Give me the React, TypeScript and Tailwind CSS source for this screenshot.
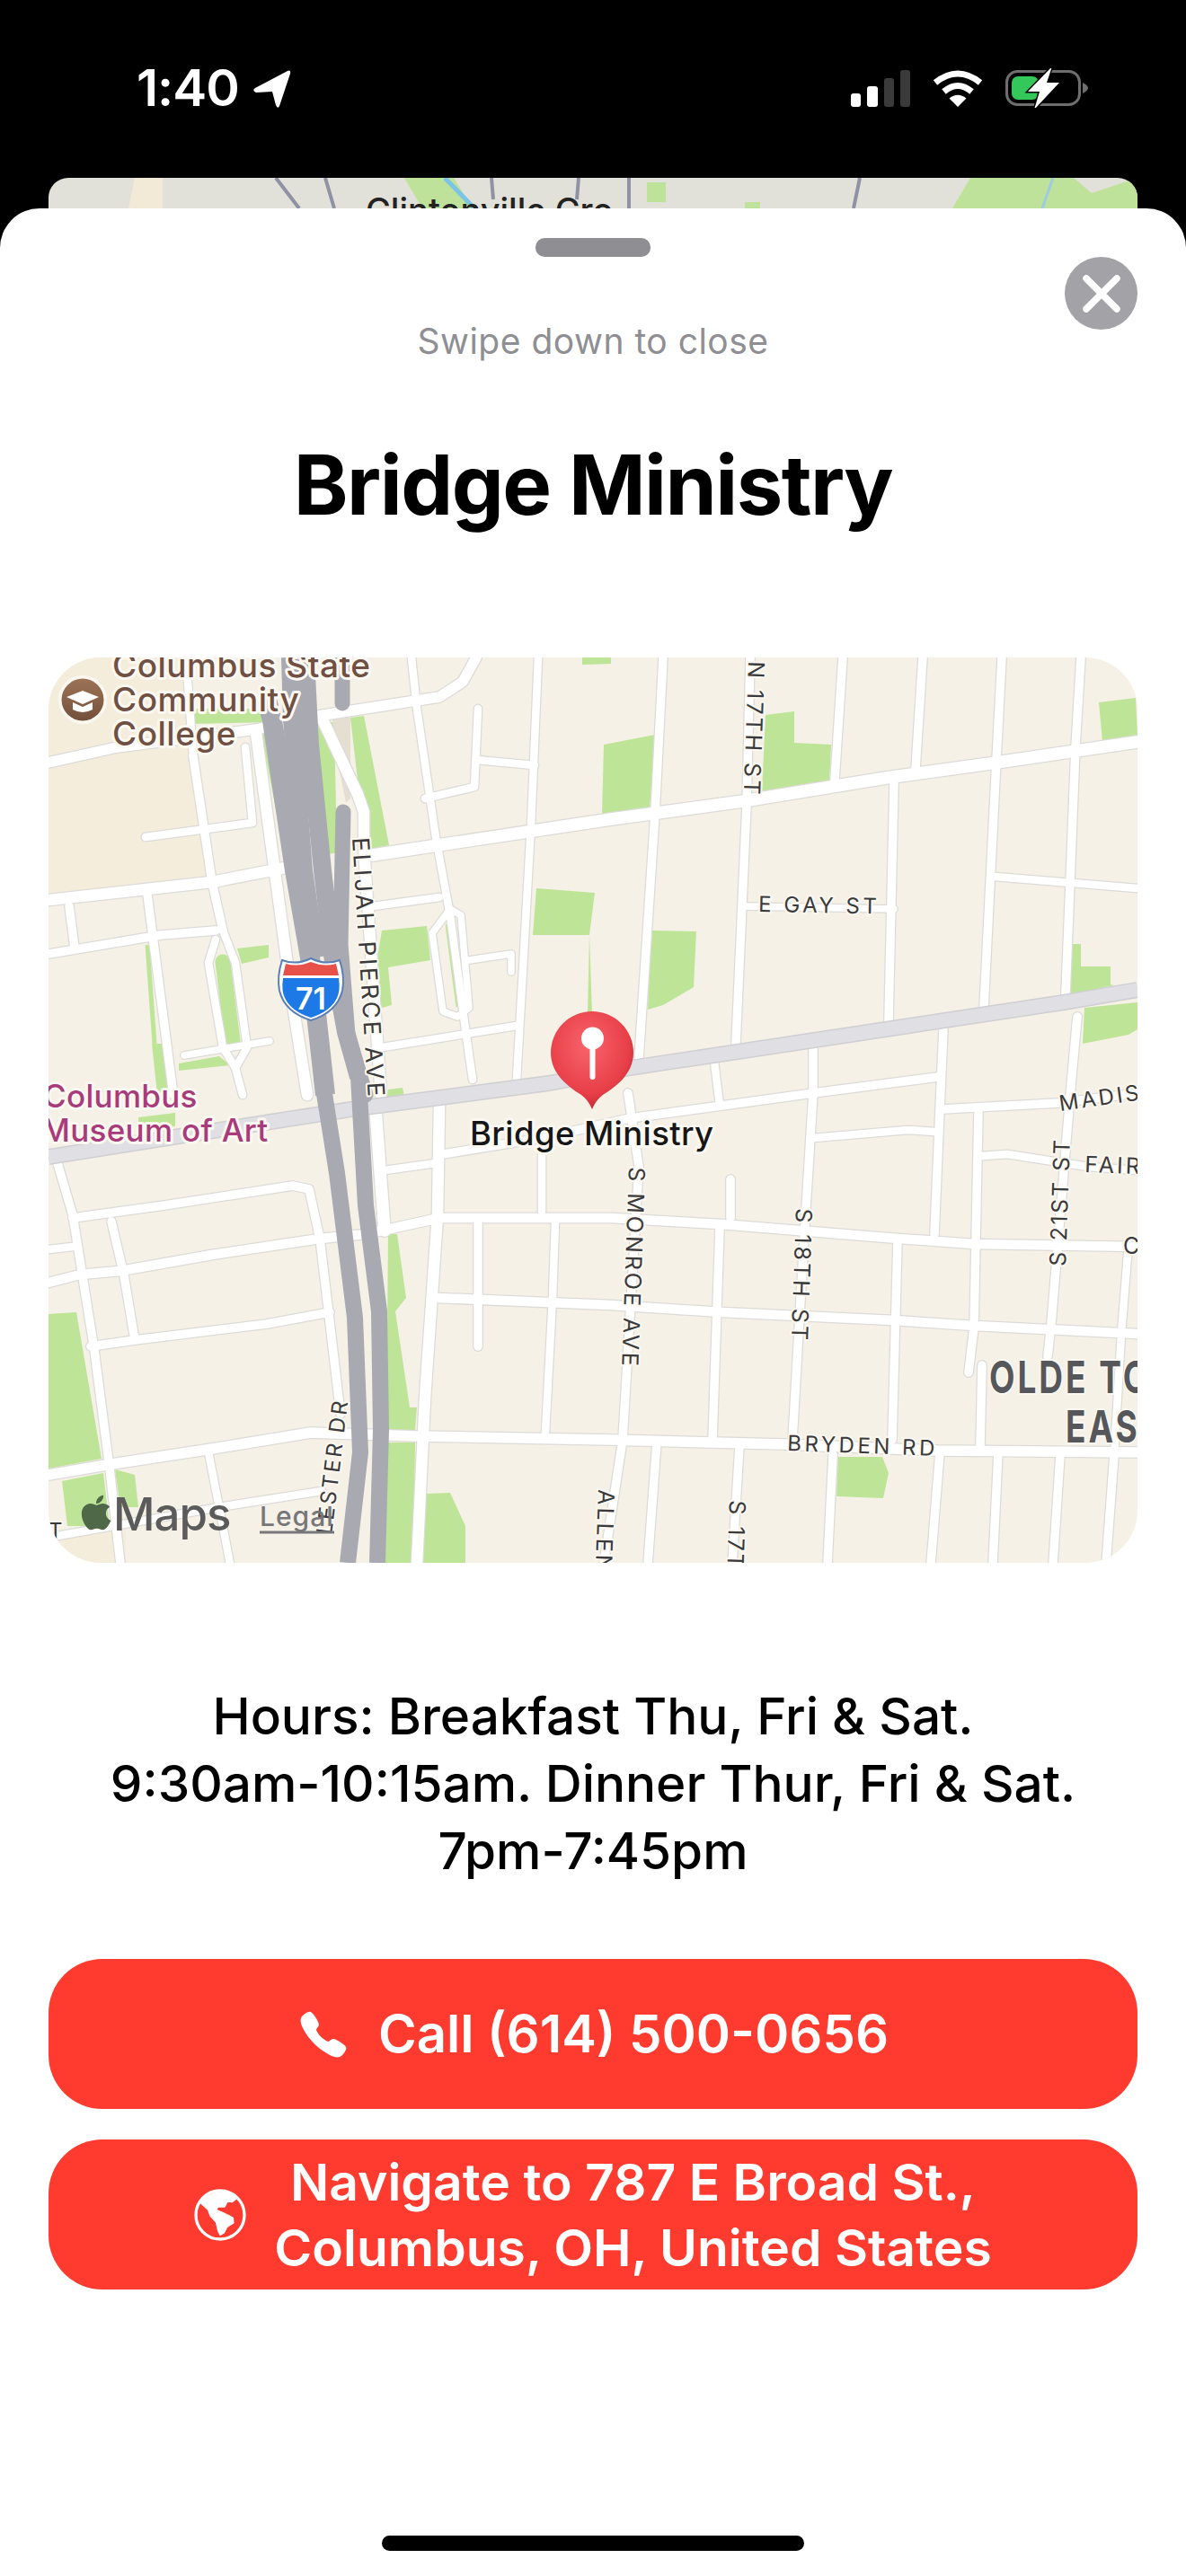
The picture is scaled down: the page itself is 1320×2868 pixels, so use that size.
import { IoCall } from "react-icons/io5";
import { FaApple } from "react-icons/fa";

// [points, width] in page pixels, the svg viewBox starts at the map's corner
const roads: [string, number][] = [
  ["54,850 130,833 285,813 354,798 489,777 515,760 530,733", 10],
  ["54,1003 236,983 318,967", 11],
  ["415,953 680,913 827,893 986,867 1109,850 1266,827", 12],
  ["54,1063 179,1042 240,1037", 8],
  ["77,1010 83,1056", 8],
  ["164,997 193,1220", 8],
  ["215,843 236,983 248,1037", 8],
  ["240,1047 232,1073 248,1167 262,1190", 7],
  ["248,1037 262,1073 275,1167 262,1190 270,1220", 7],
  ["205,1176 300,1160", 6],
  ["285,817 326,1120 342,1220", 11],
  ["162,933 281,917 273,833", 7],
  ["207,733 215,843", 7],
  ["458,733 464,790 485,933 501,1020 518,1147 526,1203", 7],
  ["599,733 591,920 575,1203", 7],
  ["532,790 528,877 473,890", 7],
  ["530,847 595,853", 7],
  ["415,1010 489,1000", 7],
  ["481,1040 501,1013 513,1020 522,1123 509,1133 493,1127 481,1040", 6],
  ["522,1070 569,1063 569,1083", 6],
  ["426,1167 575,1143", 7],
  ["358,800 372,830 398,885 405,905 405,947 424,1220", 11],
  ["64,1296 81,1354 105,1504 122,1636 134,1742", 8],
  ["81,1357 183,1343 326,1321 344,1325 356,1380 379,1575", 8],
  ["54,1392 81,1389", 7],
  ["54,1429 89,1420 134,1416 236,1398 356,1380 407,1375 489,1357 680,1357 803,1364 987,1379 1084,1386 1266,1389", 9],
  ["124,1361 138,1421 150,1493", 8],
  ["101,1500 150,1493 297,1475 367,1462", 8],
  ["54,1643 118,1632 236,1614 346,1596 464,1600 680,1604 872,1609 1044,1616 1266,1618", 10],
  ["232,1618 248,1700 256,1742", 7],
  ["64,1711 244,1679 358,1661", 7],
  ["418,1236 428,1371", 12],
  ["428,1304 485,1296", 7],
  ["489,1232 487,1354 473,1557 464,1742", 11],
  ["493,1286 603,1268 701,1246 803,1232 905,1218 1044,1200", 8],
  ["603,1286 603,1350", 7],
  ["532,1357 532,1500", 8],
  ["618,1361 615,1446 607,1596", 7],
  ["487,1446 680,1454 803,1462 995,1471 1084,1477 1266,1486", 9],
  ["738,733 729,907 711,1180", 8],
  ["699,1218 711,1300", 8],
  ["711,1300 693,1604 672,1742", 8],
  ["835,733 831,897 819,1163", 8],
  ["938,733 929,870", 8],
  ["1027,733 1019,857", 8],
  ["1115,733 1109,847 1095,1123", 8],
  ["1203,733 1197,833 1186,1108", 8],
  ["995,873 989,1137", 8],
  ["1107,977 1266,990", 7],
  ["827,1010 995,1013", 6],
  ["795,1183 801,1232", 7],
  ["905,1167 905,1218 895,1379 882,1604", 8],
  ["1050,1147 1046,1236 1040,1375", 8],
  ["1199,1133 1191,1221 1170,1475 1166,1511", 8],
  ["813,1314 813,1357", 8],
  ["801,1368 793,1604", 8],
  ["999,1382 993,1604", 8],
  ["1089,1239 1084,1479 1078,1529", 8],
  ["1093,1521 1091,1611", 8],
  ["905,1268 1011,1259 1040,1261", 7],
  ["1048,1236 1178,1229 1266,1218", 8],
  ["1093,1288 1121,1286 1211,1300 1266,1304", 7],
  ["823,1611 815,1742", 8],
  ["731,1607 721,1742", 8],
  ["927,1621 921,1742", 8],
  ["1046,1618 1036,1742", 8],
  ["1111,1618 1105,1742", 8],
  ["1180,1621 1172,1742", 8],
  ["1240,1621 1231,1742", 8],
  ["1256,1386 1248,1486 1240,1621", 7],
];

const greens = [
  "597,990 662,995 656,1042 593,1042",
  "672,830 729,819 723,902 670,908",
  "852,797 884,793 884,828 925,830 923,872 848,882",
  "1223,783 1264,778 1266,822 1227,827",
  "725,1037 775,1038 772,1100 738,1120 721,1125",
  "1193,1052 1203,1052 1203,1077 1236,1077 1236,1097 1240,1098 1191,1108",
  "1207,1123 1266,1117 1266,1147 1256,1153 1205,1163",
  "648,733 680,733 680,740 648,741",
  "390,800 405,798 433,942 407,947",
  "350,805 372,805 375,950 366,952",
  "290,813 297,813 325,960 318,960",
  "425,1037 475,1032 479,1070 432,1078 436,1120 410,1127",
  "264,1057 299,1053 299,1067 269,1074",
  "169,1163 187,1163 191,1220 175,1220",
  "199,1185 244,1177 256,1187 199,1193",
  "210,790 305,790 305,805 210,807",
  "54,1464 85,1462 113,1625 54,1636",
  "69,1650 115,1641 122,1700 75,1700",
  "128,1637 150,1643 154,1679 134,1679",
  "432,1375 442,1375 452,1446 440,1461 456,1568 464,1568 462,1593 430,1593",
  "430,1607 462,1607 460,1742 428,1742",
  "473,1664 501,1663 518,1700 518,1742 471,1742",
  "933,1623 982,1623 989,1641 983,1669 931,1667",
  "432,1214 448,1212 450,1221 430,1225",
  "175,1200 191,1200 191,1211 175,1211",
  "154,1245 195,1240 195,1255 154,1260",
  "656,1042 659,1130 654,1130",
];

type LabelProps = {
  x: number;
  y: number;
  rotate?: number;
  size?: number;
  spacing?: number;
  color?: string;
  weight?: number;
  halo?: number;
  children: string;
};

function Label({ x, y, rotate = 0, size = 25, spacing = 3, color = "#3a3a3c", weight = 400, halo = 4, children }: LabelProps) {
  return (
    <text
      transform={`translate(${x} ${y}) rotate(${rotate})`}
      fontSize={size}
      letterSpacing={spacing}
      fill={color}
      fontWeight={weight}
      stroke="#fbf8f1"
      strokeWidth={halo}
      paintOrder="stroke"
      strokeLinejoin="round"
    >
      {children}
    </text>
  );
}

function MapView() {
  return (
    <div className="w-[1212px] h-[1008px] mx-auto rounded-[58px] overflow-hidden bg-[#f6f1e6]">
      <svg viewBox="54 733 1212 1008" width="1212" height="1008" className="block font-['Inter',sans-serif]">
        <defs>
          <radialGradient id="pinHead" cx="0.45" cy="0.35" r="0.7">
            <stop offset="0" stopColor="#f8646c" />
            <stop offset="0.7" stopColor="#e83f48" />
            <stop offset="1" stopColor="#bf2530" />
          </radialGradient>
          <linearGradient id="poiBrown" x1="0" y1="0" x2="0" y2="1">
            <stop offset="0" stopColor="#9c7357" />
            <stop offset="1" stopColor="#74503a" />
          </linearGradient>
        </defs>

        <path d="M54 733 H210 L236 983 L54 1005 Z" fill="#f5eddb" />
        <path d="M54 1712 L140 1690 L140 1741 L54 1741 Z" fill="#f5eddb" />

        {greens.map((g) => (
          <polygon key={g} points={g} fill="#bde497" />
        ))}
        <line x1="248" y1="1072" x2="259" y2="1160" stroke="#bde497" strokeWidth="17" strokeLinecap="round" />
        <line x1="164" y1="1053" x2="172" y2="1163" stroke="#bde497" strokeWidth="5" />
        <line x1="498" y1="1030" x2="510" y2="1122" stroke="#bde497" strokeWidth="5" />
        <polygon points="370,800 390,797 390,890 385,895 372,830" fill="#e4dfd0" />

        {/* roads, grey casing under white */}
        {roads.map(([p, w]) => (
          <polyline key={`c${p}`} points={p} fill="none" stroke="#dcdbd8" strokeWidth={w + 4} strokeLinecap="round" strokeLinejoin="round" />
        ))}
        {roads.map(([p, w]) => (
          <polyline key={p} points={p} fill="none" stroke="#ffffff" strokeWidth={w + 1.5} strokeLinecap="round" strokeLinejoin="round" />
        ))}

        {/* E Broad St */}
        <polyline points="54,1289 301,1250 391,1236 611,1207 701,1190 986,1147 1184,1117 1266,1103" fill="none" stroke="#cfcfd3" strokeWidth="18" />
        <polyline points="54,1289 301,1250 391,1236 611,1207 701,1190 986,1147 1184,1117 1266,1103" fill="none" stroke="#e0e0e4" strokeWidth="15" />

        {/* I-71 */}
        <g fill="none" stroke="#a9a9b1" strokeLinejoin="round">
          <polyline points="297,780 303,803 328,970 345,1067 362,1220" strokeWidth="22" />
          <polyline points="323,733 325,803 338,970 352,1067" strokeWidth="20" />
          <polyline points="340,733 345,830 359,970 372,1080 385,1150 399,1200" strokeWidth="20" />
          <polyline points="358,1200 375,1307 395,1468 401,1618 387,1741" strokeWidth="18" />
          <polyline points="399,1200 407,1343 422,1461 424,1593 420,1741" strokeWidth="18" />
          <polyline points="382,905 379,1053 387,1153 407,1220" strokeWidth="17" strokeLinecap="round" />
          <polyline points="381,733 381,784" strokeWidth="17" strokeLinecap="round" />
        </g>

        <Label x={125} y={755} size={37} spacing={0.5} color="#6f5043" weight={500} halo={6}>Columbus State</Label>
        <Label x={125} y={793} size={37} spacing={0.5} color="#6f5043" weight={500} halo={6}>Community</Label>
        <Label x={125} y={831} size={37} spacing={0.5} color="#6f5043" weight={500} halo={6}>College</Label>
        <circle cx="92" cy="780" r="27" fill="#fbf8f1" />
        <circle cx="92" cy="780" r="23.5" fill="url(#poiBrown)" />
        <path d="M92 770 L110 777 L92 785 L74 777 Z" fill="#fff" />
        <path d="M81 783 V791 Q92 797 103 791 V783 L92 788 Z" fill="#fff" />

        <Label x={48} y={1234} size={35} spacing={0.3} color="#a83c7b" weight={500} halo={6}>Columbus</Label>
        <Label x={46} y={1272} size={35} spacing={0.3} color="#a83c7b" weight={500} halo={6}>Museum of Art</Label>

        <Label x={392} y={934} rotate={86.5} size={26} spacing={2.8}>ELIJAH PIERCE AVE</Label>
        <Label x={833} y={737} rotate={92} size={25}>N 17TH ST</Label>
        <Label x={844} y={1016} rotate={1} size={24} spacing={3.5}>E GAY ST</Label>
        <Label x={700} y={1300} rotate={92}>S MONROE AVE</Label>
        <Label x={886} y={1346} rotate={92}>S 18TH ST</Label>
        <Label x={1186} y={1411} rotate={-88} size={25} spacing={2.6}>S 21ST ST</Label>
        <Label x={1180} y={1238} rotate={-8} size={24} spacing={3}>MADISON</Label>
        <Label x={1207} y={1306} rotate={2} size={25} spacing={3}>FAIRWOOD</Label>
        <Label x={1250} y={1397} size={25}>C</Label>
        <Label x={876} y={1616} rotate={2} size={24} spacing={3.5}>BRYDEN RD</Label>
        <Label x={666} y={1659} rotate={92}>ALLEN</Label>
        <Label x={812} y={1671} rotate={92}>S 17TH</Label>
        <Label x={369} y={1710} rotate={-83} size={24} spacing={2.6}>LESTER DR</Label>
        <Label x={54} y={1714} size={24}>T</Label>

        <g transform="translate(1101 1552) scale(0.74 1)">
          <text fontSize="50" fontWeight="700" letterSpacing="4" fill="#56575b" stroke="#fbf8f1" strokeWidth="4" paintOrder="stroke">OLDE TOWN</text>
        </g>
        <g transform="translate(1186 1607) scale(0.74 1)">
          <text fontSize="50" fontWeight="700" letterSpacing="4" fill="#56575b" stroke="#fbf8f1" strokeWidth="4" paintOrder="stroke">EAST</text>
        </g>

        {/* interstate shield */}
        <path d="M314 1070 q16 6 32 -2 q16 8 32 2 q6 18 3 34 q-6 24 -35 33 q-29 -9 -35 -33 q-3 -16 3 -34 Z" fill="#fff" stroke="#5a7fb5" strokeWidth="2" />
        <path d="M318 1074 q14 4 28 -2 q14 6 28 2 l3 13 h-62 Z" fill="#e8504a" />
        <path d="M315 1090 h62 q2 14 -2 22 q-7 15 -29 22 q-22 -7 -29 -22 q-4 -8 -2 -22 Z" fill="#1d79e6" />
        <text x="346" y="1125" textAnchor="middle" fontSize="34" fontWeight="600" fill="#fff">71</text>

        {/* pin */}
        <path d="M659 1127 a46 46 0 0 1 46 46 c0 24 -20 38 -34 47 q-8 6 -12 16 q-4 -10 -12 -16 c-14 -9 -34 -23 -34 -47 a46 46 0 0 1 46 -46 Z" fill="url(#pinHead)" />
        <circle cx="659.5" cy="1157" r="12.5" fill="#fff" />
        <rect x="656.5" y="1165" width="6" height="38" rx="3" fill="#fff" />

        <Label x={523} y={1276} size={36.5} spacing={0.4} color="#161617" weight={500} halo={6}>Bridge Ministry</Label>

        {/* attribution */}
        <FaApple x={85} y={1663} size={44} color="#4f6848" />
        <text x={126} y={1705} fontSize="51" fontWeight="500" letterSpacing="-1" fill="#5b5b5b">Maps</text>
        <text x={289} y={1700} fontSize="30" fontWeight="500" letterSpacing="1" fill="#77777a">Legal</text>
        <line x1="289" y1="1707" x2="372" y2="1707" stroke="#77777a" strokeWidth="3" />
      </svg>
    </div>
  );
}

function StatusBar() {
  return (
    <div className="h-[198px] flex items-start justify-between pt-[70px] pl-[152px] pr-[109px] text-white">
      <div className="flex items-center gap-[15px] h-[56px]">
        <span className="text-[57px] leading-[56px] font-semibold tracking-[-1px]">1:40</span>
        <svg width="44" height="45" viewBox="0 0 44 45">
          <path d="M3 22 L39 3 Q43 1 42 6 L30 42 Q28 46 26 41 L22 26 L4 27 Q-1 25 3 22 Z" fill="#fff" />
        </svg>
      </div>
      <div className="flex items-center gap-[25px] h-[56px]">
        <div className="flex items-end gap-[7px] h-[41px]">
          <div className="w-[11px] h-[15px] rounded-[3px] bg-white" />
          <div className="w-[12px] h-[23px] rounded-[3px] bg-white" />
          <div className="w-[11px] h-[32px] rounded-[3px] bg-[#3a3a3a]" />
          <div className="w-[11px] h-[41px] rounded-[3px] bg-[#3a3a3a]" />
        </div>
        <svg width="56" height="41" viewBox="0 0 56 41" fill="none" stroke="#fff" strokeWidth="7">
          <path d="M3 14 Q28 -6 53 14" />
          <path d="M12.5 24 Q28 11 43.5 24" />
          <path d="M28 41 L18.5 31.5 Q28 24 37.5 31.5 Z" fill="#fff" stroke="none" />
        </svg>
        <svg width="92" height="44" viewBox="0 0 92 44">
          <rect x="1.5" y="3.5" width="81" height="37" rx="12" fill="none" stroke="#6e6e6e" strokeWidth="3" />
          <rect x="7" y="9" width="30" height="26" rx="7" fill="#34c759" />
          <path d="M86 16 Q92 19 92 22 Q92 25 86 28 Z" fill="#6e6e6e" />
          <path d="M52 -2 L25 26 H38 L32 46 L60 16 H46 Z" fill="#fff" stroke="#000" strokeWidth="3" paintOrder="stroke" />
        </svg>
      </div>
    </div>
  );
}

// card of the page underneath, only its top edge shows above the sheet
function BehindCard() {
  return (
    <div className="mx-[54px] h-[34px] rounded-t-[22px] overflow-hidden bg-[#e2e1d9]">
      <svg viewBox="54 198 1212 34" width="1212" height="34" className="block font-['Inter',sans-serif]">
        <polygon points="150,198 181,198 181,232 143,232" fill="#f2ead6" />
        <polygon points="450,198 505,198 526,232 470,232" fill="#bfe29b" />
        <polygon points="720,203 741,203 741,225 720,225" fill="#bfe29b" />
        <polygon points="829,225 846,225 846,232 829,232" fill="#bfe29b" />
        <polygon points="1060,232 1080,198 1195,198 1215,215 1266,198 1266,232" fill="#bfe29b" />
        <path d="M495 198 L528 232" stroke="#7cc4e6" strokeWidth="5" />
        <path d="M1172 198 L1160 232" stroke="#9dcbe0" strokeWidth="3" />
        <path d="M307 198 L333 232 M362 198 L372 232 M547 198 L549 222 M644 198 L642 222 M700 198 L700 232 M957 198 L950 232" stroke="#8e92a4" strokeWidth="4" fill="none" />
        <text x="407" y="248" fontSize="38" fontWeight="500" fill="#222">Clintonville Cro</text>
      </svg>
    </div>
  );
}

export default function App() {
  return (
    <div className="w-[1320px] h-[2868px] bg-black overflow-hidden flex flex-col font-['Inter',sans-serif]">
      <StatusBar />
      <BehindCard />

      <div className="relative flex-1 bg-white rounded-t-[44px] flex flex-col">
        <div className="w-[128px] h-[21px] rounded-[10px] bg-[#8e8e93] mx-auto mt-[33px]" />

        <button className="absolute right-[54px] top-[54px] w-[81px] h-[81px] rounded-full bg-[#a2a2a7] flex items-center justify-center">
          <svg width="44" height="44" viewBox="0 0 44 44" fill="none" stroke="#fff" strokeWidth="7.5" strokeLinecap="round">
            <path d="M5 5 L39 39 M39 5 L5 39" />
          </svg>
        </button>

        <p className="mt-[71px] text-center text-[39px] leading-[46px] tracking-[0.5px] text-[#8e8e93]">Swipe down to close</p>

        <h1 className="mt-[87px] text-center text-[92px] leading-[100px] font-bold text-black tracking-[-1.5px]">Bridge Ministry</h1>

        <div className="mt-[142px]">
          <MapView />
        </div>

        <p className="mt-[133px] text-center text-[56.7px] leading-[75px] font-medium text-black">
          Hours: Breakfast Thu, Fri &amp; Sat.
          <br />
          9:30am-10:15am. Dinner Thur, Fri &amp; Sat.
          <br />
          7pm-7:45pm
        </p>

        <div className="mt-[83px] px-[54px] flex flex-col gap-[34px] text-white text-[57px] leading-[73px] font-semibold">
          <button className="h-[167px] rounded-[60px] bg-[#ff3b30] flex items-center justify-center gap-[32px]">
            <IoCall size={58} />
            <span className="text-[58px]">Call (614) 500-0656</span>
          </button>
          <button className="h-[167px] rounded-[60px] bg-[#ff3b30] flex items-center justify-center gap-[31px]">
            <svg width="58" height="58" viewBox="38 38 174 174">
              <circle cx="125" cy="125" r="81" fill="none" stroke="#fff" strokeWidth="10" />
              <path
                d="M60 85 Q85 52 125 50 Q160 50 178 72 L165 82 L150 80 L140 98 L118 98 L112 108 L135 118 L150 125 L168 135 L170 152 L148 165 L138 185 L125 192 L118 178 L112 150 L92 128 L85 108 Z"
                fill="#fff"
                stroke="#fff"
                strokeWidth="4"
                strokeLinejoin="round"
              />
            </svg>
            <span className="text-center">
              Navigate to 787 E Broad St.,
              <br />
              Columbus, OH, United States
            </span>
          </button>
        </div>

        <div className="mt-auto mb-[28px] mx-auto w-[470px] h-[17px] rounded-full bg-black" />
      </div>
    </div>
  );
}
